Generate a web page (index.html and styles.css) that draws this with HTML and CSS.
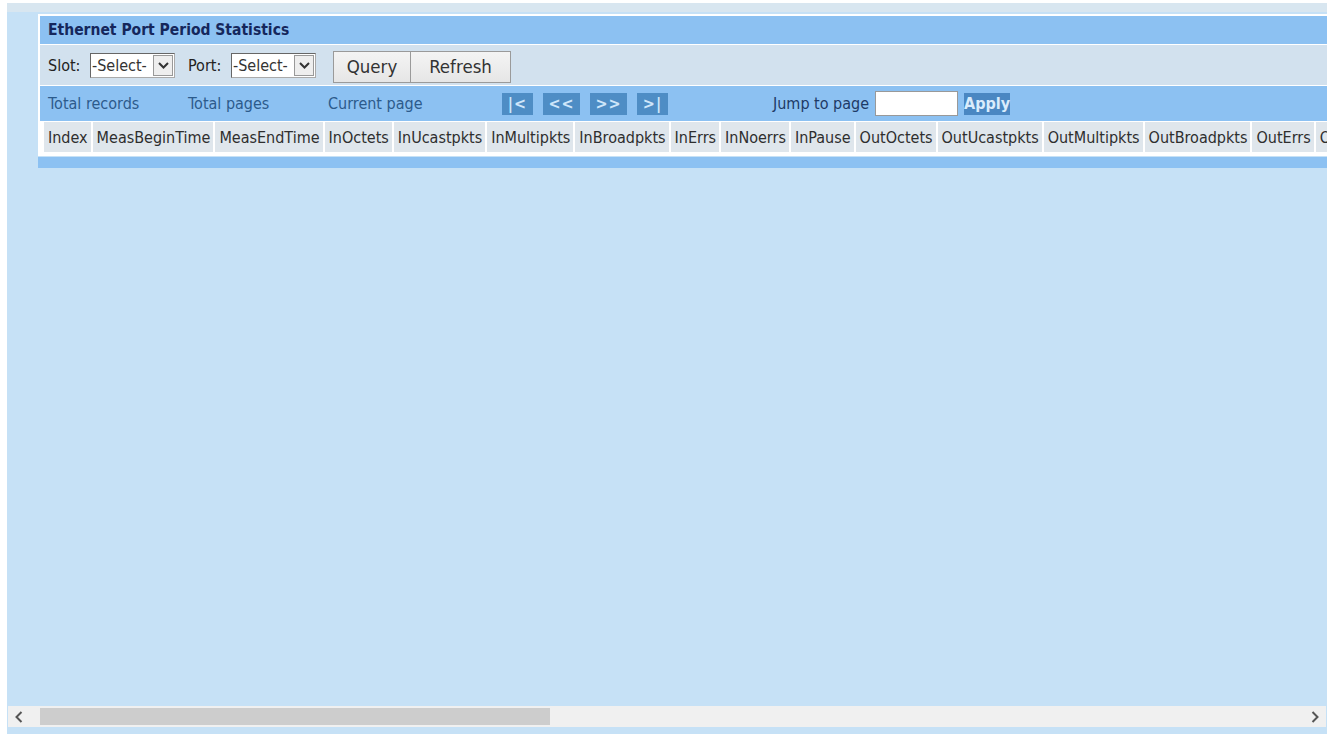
FILE: index.html
```html
<!DOCTYPE html>
<html lang="en">
<head>
<meta charset="UTF-8" />
<title>Ethernet Port Period Statistics</title>
<link rel="stylesheet" href="styles.css">
</head>
<body>
<div class="frame">
  <div class="frame-top"></div>
  <div class="viewport">
    <div class="panel">
      <div class="title-bar">Ethernet Port Period Statistics</div>
      <div class="toolbar">
        <label class="field-label">Slot:</label>
        <span class="select"><span class="select-text">-Select-</span><span class="select-arrow"><svg width="11" height="7" viewBox="0 0 11 7"><path d="M1 1 L5.5 5.5 L10 1" fill="none" stroke="#333" stroke-width="2"/></svg></span></span>
        <label class="field-label port-label">Port:</label>
        <span class="select"><span class="select-text">-Select-</span><span class="select-arrow"><svg width="11" height="7" viewBox="0 0 11 7"><path d="M1 1 L5.5 5.5 L10 1" fill="none" stroke="#333" stroke-width="2"/></svg></span></span>
        <div class="btn-group">
          <button type="button" class="btn btn-query">Query</button>
          <button type="button" class="btn btn-refresh">Refresh</button>
        </div>
      </div>
      <div class="pager">
        <span class="pager-label">Total records</span>
        <span class="pager-label">Total pages</span>
        <span class="pager-label wide">Current page</span>
        <div class="nav-group">
          <span class="nav-btn narrow">|&lt;</span>
          <span class="nav-btn">&lt;&lt;</span>
          <span class="nav-btn">&gt;&gt;</span>
          <span class="nav-btn narrow">&gt;|</span>
        </div>
        <span class="jump-label">Jump to page</span>
        <input type="text" class="jump-input" />
        <span class="apply-btn">Apply</span>
      </div>
      <table class="stats-table">
        <thead>
          <tr>
            <th>Index</th>
            <th>MeasBeginTime</th>
            <th>MeasEndTime</th>
            <th>InOctets</th>
            <th>InUcastpkts</th>
            <th>InMultipkts</th>
            <th>InBroadpkts</th>
            <th>InErrs</th>
            <th>InNoerrs</th>
            <th>InPause</th>
            <th>OutOctets</th>
            <th>OutUcastpkts</th>
            <th>OutMultipkts</th>
            <th>OutBroadpkts</th>
            <th>OutErrs</th>
            <th>OutNoerrs</th>
            <th>OutPause</th>
          </tr>
        </thead>
      </table>
    </div>
    <div class="panel-strip"></div>
  </div>
  <div class="hscroll">
    <span class="hscroll-arrow"><svg width="8" height="12" viewBox="0 0 8 12"><path d="M6.5 1 L1.5 6 L6.5 11" fill="none" stroke="#555" stroke-width="2"/></svg></span>
    <div class="hscroll-track"><div class="hscroll-thumb"></div></div>
    <span class="hscroll-arrow"><svg width="8" height="12" viewBox="0 0 8 12"><path d="M1.5 1 L6.5 6 L1.5 11" fill="none" stroke="#555" stroke-width="2"/></svg></span>
  </div>
</div>
</body>
</html>
```

FILE: styles.css
```css
body {
  margin: 0;
  background-color: #fff;
  font-family: "DejaVu Sans Condensed", "DejaVu Sans", sans-serif;
  font-stretch: condensed;
  font-size: 16px;
  color: #333;
}
.frame {
  margin: 3px 5px 0 7px;
  height: 731px;
  background-color: #c6e1f6;
  display: flex;
  flex-direction: column;
  overflow: hidden;
}
.frame-top {
  height: 9px;
  background-color: #d8e6f0;
  flex: none;
}
.viewport {
  flex: 1;
  overflow: hidden;
  padding: 2px 0 0 31px;
}
.panel {
  width: 2400px;
  background-color: #fff;
  padding: 2px 2px 4px 2px;
  display: flex;
  flex-direction: column;
  gap: 1px;
}
.title-bar {
  height: 28px;
  line-height: 28px;
  background-color: #8cc1f2;
  padding-left: 8px;
  font-weight: 700;
  font-size: 15.5px;
  color: #15275c;
}
.toolbar {
  height: 40px;
  background-color: #d2e1ee;
  display: flex;
  align-items: center;
  padding-left: 8px;
}
.field-label {
  width: 42px;
  color: #222;
}
.port-label {
  margin-left: 13px;
  width: 43px;
}
.select {
  display: flex;
  align-items: center;
  width: 83px;
  height: 23px;
  background-color: #fff;
  border: 1px solid #aaa;
  border-top-color: #666;
  border-left-color: #666;
  margin-top: 1px;
}
.select-text {
  flex: 1;
  padding-left: 1px;
  color: #333;
  white-space: nowrap;
  overflow: hidden;
}
.select-arrow {
  flex: none;
  width: 18px;
  height: 19px;
  margin-right: 1px;
  border: 1px solid #999;
  background-color: #eee;
  display: flex;
  align-items: center;
  justify-content: center;
}
.btn-group {
  display: flex;
  margin-left: 17px;
  margin-top: 3px;
}
.btn {
  height: 32px;
  font-family: inherit;
  font-stretch: condensed;
  font-size: 18.5px;
  color: #333;
  background: linear-gradient(#f4f4f4, #e6e6e6);
  border: 1px solid #9a9a9a;
  padding: 0;
}
.btn-query {
  width: 78px;
}
.btn-refresh {
  width: 100px;
  border-left: none;
}
.pager {
  height: 35px;
  background-color: #8cc1f2;
  display: flex;
  align-items: center;
  padding-left: 8px;
  color: #2c5b8c;
}
.pager-label {
  width: 140px;
  flex: none;
  white-space: nowrap;
}
.pager-label.wide {
  width: 174px;
}
.nav-group {
  display: flex;
  gap: 10px;
}
.nav-btn {
  width: 37px;
  height: 22px;
  line-height: 22px;
  text-align: center;
  background-color: #4e8dc5;
  color: #cfe6fa;
  font-weight: 700;
  letter-spacing: 1px;
}
.nav-btn.narrow {
  width: 31px;
}
.jump-label {
  flex: none;
  margin-left: 105px;
  color: #1e3a66;
  width: 102px;
  white-space: nowrap;
}
.jump-input {
  width: 81px;
  height: 23px;
  padding: 0;
  border: 1px solid #999;
  background-color: #fff;
  margin: 0;
}
.apply-btn {
  margin-left: 6px;
  width: 46px;
  height: 22px;
  line-height: 22px;
  text-align: center;
  background-color: #4a87c2;
  color: #d9ecfc;
  font-weight: 700;
}
.stats-table {
  align-self: flex-start;
  border-collapse: separate;
  border-spacing: 2px 0;
  margin-left: 2px;
}
.stats-table th {
  height: 30px;
  padding: 0 3px 0 4px;
  background-color: #dfe6ec;
  font-weight: 400;
  white-space: nowrap;
  color: #2e2e2e;
}
.panel-strip {
  width: 2404px;
  height: 11px;
  margin-top: 1px;
  background-color: #8cc1f2;
}
.hscroll {
  flex: none;
  height: 21px;
  margin: 0 1px 7px 1px;
  background-color: #f0f0f0;
  display: flex;
  align-items: center;
}
.hscroll-arrow {
  width: 22px;
  display: flex;
  justify-content: center;
}
.hscroll-track {
  flex: 1;
  height: 17px;
  padding-left: 10px;
  margin-right: 10px;
}
.hscroll-thumb {
  width: 510px;
  height: 17px;
  background-color: #cdcdcd;
}
```
